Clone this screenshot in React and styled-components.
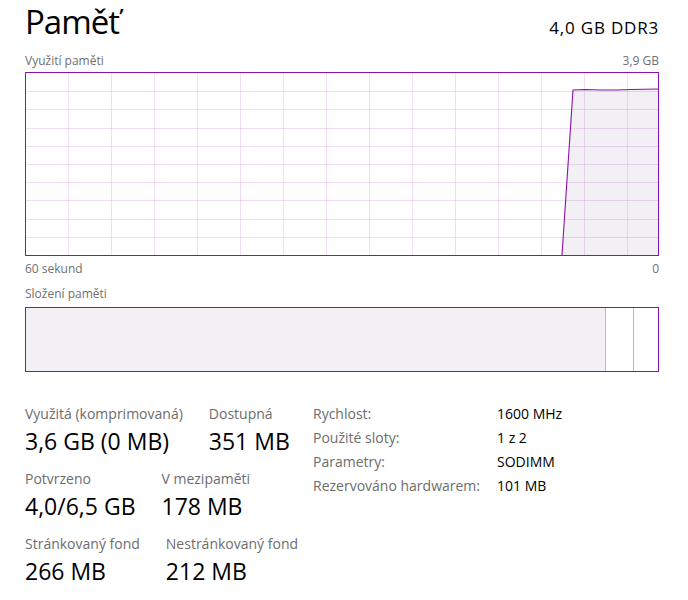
import React from "react";
import styled, { createGlobalStyle } from "styled-components";

const GlobalStyle = createGlobalStyle`
  body {
    margin: 0;
    background: #fff;
    font-family: "Open Sans", "Noto Sans", sans-serif;
  }
`;

const purple = "#8b12ae";

const usage = [
  [536, 182],
  [547, 17],
  [560, 16.5],
  [575, 17],
  [590, 17],
  [605, 16.5],
  [632, 16],
];

const stats = [
  [
    ["Využitá (komprimovaná)", "3,6 GB (0 MB)"],
    ["Dostupná", "351 MB"],
  ],
  [
    ["Potvrzeno", "4,0/6,5 GB"],
    ["V mezipaměti", "178 MB"],
  ],
  [
    ["Stránkovaný fond", "266 MB"],
    ["Nestránkovaný fond", "212 MB"],
  ],
];

const details = [
  ["Rychlost:", "1600 MHz"],
  ["Použité sloty:", "1 z 2"],
  ["Parametry:", "SODIMM"],
  ["Rezervováno hardwarem:", "101 MB"],
];

const UsageGraph = () => {
  const line = usage.map((p) => p.join(",")).join(" ");
  const area = line + " 632,182";
  return (
    <svg width="632" height="182" viewBox="0 0 632 182">
      <polygon points={area} fill="#f2f0f4" />
      {Array.from({ length: 14 }, (_, i) => (
        <line key={"v" + i} x1={42 + 43 * i + 0.5} x2={42 + 43 * i + 0.5} y1="0" y2="182" stroke="rgba(139,18,174,0.14)" />
      ))}
      {Array.from({ length: 9 }, (_, i) => (
        <line key={"h" + i} x1="0" x2="632" y1={Math.round(18.2 * (i + 1)) + 0.5} y2={Math.round(18.2 * (i + 1)) + 0.5} stroke="rgba(139,18,174,0.14)" />
      ))}
      <polyline points={line} fill="none" stroke={purple} strokeWidth="1.1" />
    </svg>
  );
};

const App = () => {
  return (
    <>
      <GlobalStyle />
      <Page>
        <Header>
          <Title>Paměť</Title>
          <Spec>4,0 GB DDR3</Spec>
        </Header>
        <CaptionRow $top={7}>
          <span>Využití paměti</span>
          <span>3,9 GB</span>
        </CaptionRow>
        <Graph>
          <UsageGraph />
        </Graph>
        <CaptionRow $top={5}>
          <span>60 sekund</span>
          <span>0</span>
        </CaptionRow>
        <CaptionRow $top={9}>
          <span>Složení paměti</span>
        </CaptionRow>
        <Composition>
          <Segment $width={579} $fill="#f2f0f4" />
          <Segment $width={27} />
          <Segment />
        </Composition>
        <Bottom>
          <Stats>
            {stats.map((row, i) => (
              <StatRow key={i}>
                {row.map(([label, value]) => (
                  <Stat key={label}>
                    <StatLabel>{label}</StatLabel>
                    <StatValue>{value}</StatValue>
                  </Stat>
                ))}
              </StatRow>
            ))}
          </Stats>
          <Details>
            {details.map(([label, value]) => (
              <React.Fragment key={label}>
                <DetailLabel>{label}</DetailLabel>
                <DetailValue>{value}</DetailValue>
              </React.Fragment>
            ))}
          </Details>
        </Bottom>
      </Page>
    </>
  );
};

const Page = styled.div`
  width: 634px;
  padding: 0 29px 0 25px;
`;

const Header = styled.div`
  display: flex;
  justify-content: space-between;
  align-items: baseline;
  margin-top: -1px;
  height: 47px;
`;

const Title = styled.div`
  font-size: 33px;
  line-height: normal;
  letter-spacing: -1px;
  color: #000;
`;

const Spec = styled.div`
  font-size: 17px;
  letter-spacing: 0.8px;
  color: #000;
`;

const CaptionRow = styled.div`
  display: flex;
  justify-content: space-between;
  margin-top: ${(p) => p.$top}px;
  font-size: 12px;
  line-height: 16px;
  color: #707070;
`;

const Graph = styled.div`
  margin-top: 3px;
  width: 634px;
  height: 184px;
  box-sizing: border-box;
  border: 1px solid ${purple};

  svg {
    display: block;
  }
`;

const Composition = styled.div`
  display: flex;
  margin-top: 5px;
  width: 634px;
  height: 65px;
  box-sizing: border-box;
  border: 1px solid ${purple};
`;

const Segment = styled.div`
  ${(p) => (p.$width ? `width: ${p.$width}px;` : "flex: 1;")}
  background: ${(p) => p.$fill || "#fff"};
  ${(p) => (p.$width ? "border-right: 1px solid #cba9d8;" : "")}
`;

const Bottom = styled.div`
  display: flex;
  margin-top: 32px;
`;

const Stats = styled.div`
  width: 288px;
  display: flex;
  flex-direction: column;
  gap: 12px;
`;

const StatRow = styled.div`
  display: flex;
  gap: 26px;
`;

const Stat = styled.div`
  display: flex;
  flex-direction: column;
  gap: 2px;
`;

const StatLabel = styled.div`
  font-size: 14px;
  line-height: 20px;
  color: #6d6d6d;
  white-space: nowrap;
`;

const StatValue = styled.div`
  font-size: 23px;
  line-height: 31px;
  color: #000;
  white-space: nowrap;
`;

const Details = styled.div`
  display: grid;
  grid-template-columns: 184px auto;
  grid-auto-rows: 24px;
  align-items: center;
  margin-top: -3px;
  font-size: 14px;
`;

const DetailLabel = styled.div`
  color: #6d6d6d;
`;

const DetailValue = styled.div`
  color: #000;
`;

export default App;
